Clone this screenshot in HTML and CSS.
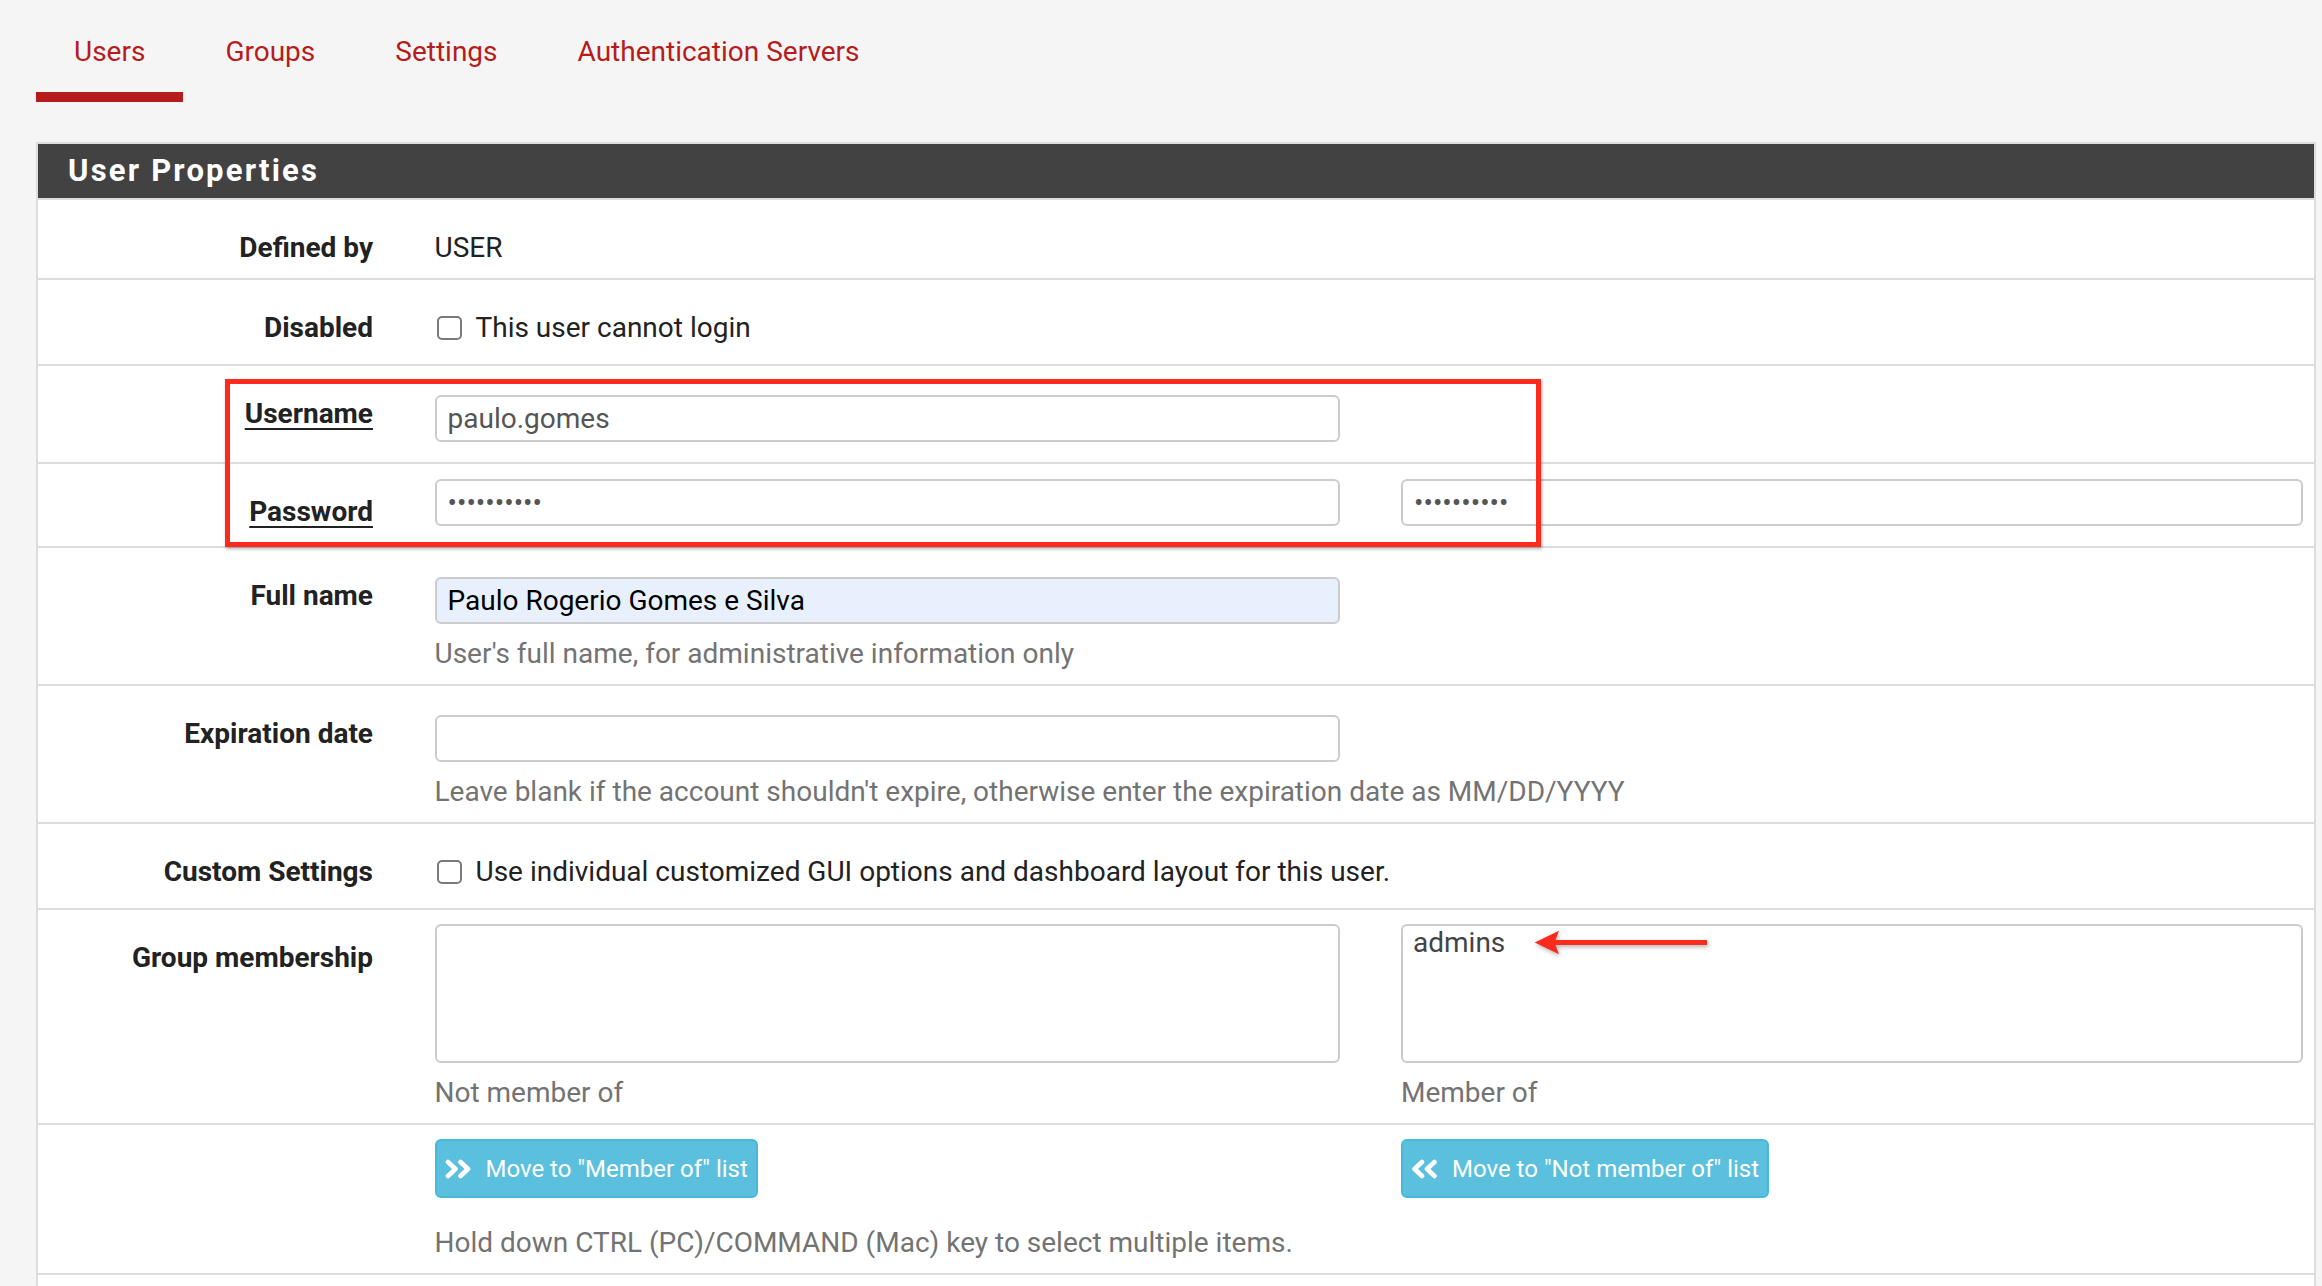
FILE: index.html
```html
<!DOCTYPE html>
<html lang="en">
<head>
<meta charset="utf-8">
<title>User Manager - Users - Edit</title>
<link rel="stylesheet" href="styles.css">
</head>
<body>
<ul class="tabs">
  <li class="tab active"><a href="#">Users</a></li>
  <li class="tab"><a href="#">Groups</a></li>
  <li class="tab"><a href="#">Settings</a></li>
  <li class="tab"><a href="#">Authentication Servers</a></li>
</ul>

<div class="panel">
  <div class="panel-heading"><h2 class="panel-title">User Properties</h2></div>
  <div class="panel-body">
    <div class="row">
      <div class="lbl">Defined by</div>
      <div class="cell wide text">USER</div>
    </div>
    <div class="row">
      <div class="lbl">Disabled</div>
      <label class="cell wide check"><input type="checkbox" class="cb"><span>This user cannot login</span></label>
    </div>
    <div class="row">
      <div class="lbl"><span class="req">Username</span></div>
      <div class="cell"><input class="input" type="text" value="paulo.gomes"></div>
    </div>
    <div class="row">
      <div class="lbl"><span class="req">Password</span></div>
      <div class="cell"><input class="input pw" type="password" value="abcdefghij"></div>
      <div class="cell"><input class="input pw" type="password" value="abcdefghij"></div>
    </div>
    <div class="row">
      <div class="lbl">Full name</div>
      <div class="cell wide">
        <input class="input filled" type="text" value="Paulo Rogerio Gomes e Silva">
        <div class="help">User's full name, for administrative information only</div>
      </div>
    </div>
    <div class="row">
      <div class="lbl">Expiration date</div>
      <div class="cell wide">
        <input class="input" type="text" value="">
        <div class="help">Leave blank if the account shouldn't expire, otherwise enter the expiration date as MM/DD/YYYY</div>
      </div>
    </div>
    <div class="row">
      <div class="lbl">Custom Settings</div>
      <label class="cell wide check"><input type="checkbox" class="cb"><span>Use individual customized GUI options and dashboard layout for this user.</span></label>
    </div>
    <div class="row">
      <div class="lbl">Group membership</div>
      <div class="cell">
        <select class="list" multiple size="4"></select>
        <div class="help">Not member of</div>
      </div>
      <div class="cell">
        <select class="list" multiple size="4"><option>admins</option></select>
        <div class="help">Member of</div>
      </div>
    </div>
    <div class="row">
      <div class="lbl"></div>
      <div class="cell">
        <button class="btn" type="button">
          <svg class="ico" viewBox="0 0 28 20" aria-hidden="true"><path d="M3 3 L10.5 10 L3 17 M15.5 3 L23 10 L15.5 17"/></svg>
          <span>Move to "Member of" list</span>
        </button>
        <div class="help">Hold down CTRL (PC)/COMMAND (Mac) key to select multiple items.</div>
      </div>
      <div class="cell">
        <button class="btn" type="button">
          <svg class="ico" viewBox="0 0 28 20" aria-hidden="true"><path d="M11 3 L3.5 10 L11 17 M23.5 3 L16 10 L23.5 17"/></svg>
          <span>Move to "Not member of" list</span>
        </button>
      </div>
    </div>
    <div class="row filler"></div>
  </div>

  <div class="annot-box"></div>
  <svg class="annot-arrow" viewBox="0 0 182 34" aria-hidden="true">
    <path d="M4.7 17.5 L29 5.7 L25.5 15 L177 15 L177 20 L25.5 20 L29 29.3 Z"/>
  </svg>
</div>
</body>
</html>
```

FILE: styles.css
```css
html, body {
  margin: 0;
  padding: 0;
}

body {
  background: #f5f5f5;
  font-family: Roboto, "Liberation Sans", Arial, sans-serif;
  font-size: 28px;
  line-height: 40px;
  color: #222;
  overflow: hidden;
}

/* Tabs */
.tabs {
  display: flex;
  list-style: none;
  margin: 0;
  padding: 0 0 0 36px;
}

.tab {
  margin-right: 4px;
}

.tab a {
  display: block;
  padding: 32px 38px 20px;
  line-height: 40px;
  font-size: 28px;
  color: #b71c1c;
  text-decoration: none;
  border-bottom: 10px solid transparent;
}

.tab.active a {
  border-bottom-color: #b71c1c;
}

/* Panel */
.panel {
  position: relative;
  margin: 40px 6px 0 36px;
  border: 2px solid #dddddd;
  border-bottom: 0;
  background: #fff;
}

.panel-heading {
  height: 54px;
  background: #424242;
  border-bottom: 2px solid #dddddd;
  padding-left: 30px;
}

.panel-title {
  margin: 0;
  color: #fff;
  font-size: 31px;
  font-weight: 700;
  line-height: 54px;
  letter-spacing: 2.2px;
}

/* Rows */
.row {
  display: grid;
  grid-template-columns: 335px 905px 902px;
  column-gap: 61.5px;
  align-items: start;
  padding: 14px 0 10px;
  border-bottom: 2px solid #dddddd;
}

.row.filler {
  height: 40px;
  border-bottom: 0;
}

.lbl {
  margin-top: 14px;
  text-align: right;
  font-weight: 700;
  color: #222;
  white-space: nowrap;
}

.req {
  text-decoration: underline;
  text-decoration-thickness: 2px;
  text-underline-offset: 5px;
}

.cell {
  min-width: 0;
}

.cell.wide {
  grid-column: 2 / 4;
}

.text {
  margin-top: 14px;
}

.check {
  display: flex;
  align-items: center;
  margin-top: 14px;
  padding-bottom: 6px;
  white-space: nowrap;
}

.cb {
  appearance: none;
  -webkit-appearance: none;
  width: 25px;
  height: 24px;
  margin: 0 14px 0 2px;
  border: 2px solid #7a7a7a;
  border-radius: 5px;
  background: #fff;
  flex: none;
}

.input {
  display: block;
  box-sizing: border-box;
  width: 905px;
  height: 47px;
  margin: 15px 0 10px;
  padding: 0 11px;
  border: 2px solid #cccccc;
  border-radius: 6px;
  background: #fff;
  font-family: Roboto, "Liberation Sans", Arial, sans-serif;
  font-size: 28px;
  color: #555;
  outline: none;
}

.input.pw {
  margin-top: 1px;
}

.cell + .cell .input {
  width: 902px;
}

.input.filled {
  background: #e8f0fe;
  color: #000;
}

.help {
  color: #737373;
  white-space: nowrap;
}

.list {
  display: block;
  box-sizing: border-box;
  width: 100%;
  height: 139px;
  margin: 0 0 10px;
  padding: 0 8px;
  border: 2px solid #cccccc;
  border-radius: 6px;
  background: #fff;
  font-family: Roboto, "Liberation Sans", Arial, sans-serif;
  font-size: 28px;
  color: #444;
  outline: none;
  overflow: hidden;
}

.list option {
  padding: 0 2px;
  line-height: 33px;
}

.btn {
  display: flex;
  align-items: center;
  box-sizing: border-box;
  height: 59px;
  margin: 0 0 25px;
  padding: 0 8px;
  border: 2px solid #46b8da;
  border-radius: 6px;
  background: #5bc0de;
  color: #fff;
  font-family: Roboto, "Liberation Sans", Arial, sans-serif;
  font-size: 24px;
  white-space: nowrap;
}

.ico {
  width: 28px;
  height: 20px;
  margin-right: 13px;
  flex: none;
  fill: none;
  stroke: #fff;
  stroke-width: 4.6;
  stroke-linecap: round;
  stroke-linejoin: round;
}

/* Annotations drawn over the screenshot */
.annot-box {
  position: absolute;
  left: 187px;
  top: 235px;
  width: 1316px;
  height: 168px;
  box-sizing: border-box;
  border: 5px solid #fc2b1d;
  box-shadow: 1px 2px 3px rgba(0, 0, 0, 0.3);
  pointer-events: none;
}

.annot-arrow {
  position: absolute;
  left: 1492px;
  top: 781px;
  width: 182px;
  height: 34px;
  fill: #fc2b1d;
  filter: drop-shadow(1px 2px 2px rgba(0, 0, 0, 0.3));
}
```
